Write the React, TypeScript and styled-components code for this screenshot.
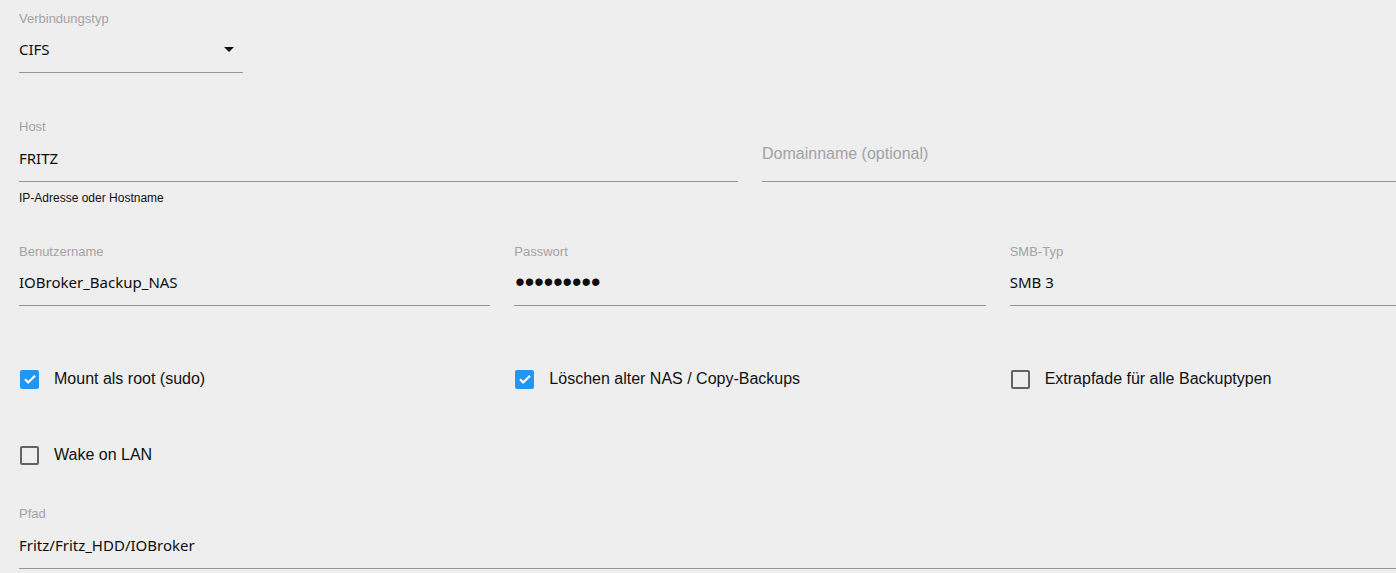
import React from "react";
import styled, { createGlobalStyle } from "styled-components";

const Global = createGlobalStyle`
  html, body { margin: 0; padding: 0; background: #eeeeee; overflow: hidden; }
  body { font-family: "Liberation Sans", Arial, sans-serif; }
`;

const Page = styled.div`
  width: 1462px;
  padding: 12px 0 0 19px;
  display: flex;
  flex-direction: column;
`;

const Section = styled.div<{ $mt?: number }>`
  margin-top: ${(p) => p.$mt ?? 0}px;
`;

const Row = styled.div<{ $cols: number }>`
  display: grid;
  grid-template-columns: repeat(${(p) => p.$cols}, 1fr);
  column-gap: 24px;
  align-items: start;
`;

const Field = styled.div<{ $width?: number }>`
  display: flex;
  flex-direction: column;
  width: ${(p) => (p.$width ? `${p.$width}px` : "auto")};
`;

const Label = styled.div`
  height: 14px;
  line-height: 14px;
  font-size: 13px;
  color: #a3a3a3;
  font-family: "Liberation Sans", Arial, sans-serif;
`;

const InputBox = styled.div<{ $h?: number }>`
  position: relative;
  height: ${(p) => p.$h ?? 47}px;
  box-sizing: border-box;
  padding-top: 0;
  display: flex;
  align-items: center;
  border-bottom: 1px solid #959595;
`;

const Value = styled.span`
  font-family: "Noto Sans", "Open Sans", sans-serif;
  font-size: 15px;
  color: #0d0d0d;
  white-space: nowrap;
`;

const Placeholder = styled.span`
  font-family: "Liberation Sans", Arial, sans-serif;
  font-size: 16px;
  color: #a3a3a3;
  margin-bottom: 8px;
`;

const Dots = styled.span`
  font-family: "Liberation Sans", Arial, sans-serif;
  font-size: 27px;
  line-height: 1;
  color: #0d0d0d;
  margin-left: 1px;
`;

const Arrow = styled.svg`
  position: absolute;
  right: 2px;
  top: 50%;
  margin-top: -12px;
  width: 24px;
  height: 24px;
`;

const Helper = styled.div`
  margin-top: 9px;
  height: 14px;
  line-height: 14px;
  font-size: 12px;
  color: #111111;
`;

const CheckRow = styled.label`
  display: flex;
  align-items: center;
  height: 42px;
  cursor: pointer;
`;

const Box = styled.span<{ $checked: boolean }>`
  width: 19px;
  height: 19px;
  box-sizing: border-box;
  margin-left: 1px;
  border-radius: 2px;
  display: flex;
  align-items: center;
  justify-content: center;
  background: ${(p) => (p.$checked ? "#2196f3" : "transparent")};
  border: ${(p) => (p.$checked ? "none" : "2px solid #636363")};
`;

const CheckText = styled.span`
  margin-left: 15px;
  font-size: 16px;
  color: #111111;
`;

function Checkbox({ checked, label }: { checked: boolean; label: string }) {
  return (
    <CheckRow>
      <Box $checked={checked}>
        {checked && (
          <svg width="16" height="16" viewBox="0 0 24 24">
            <path d="M4.5 12.5l4.8 4.8L19.5 7" fill="none" stroke="#fff" strokeWidth="3.2" />
          </svg>
        )}
      </Box>
      <CheckText>{label}</CheckText>
    </CheckRow>
  );
}

export default function App() {
  return (
    <>
      <Global />
      <Page>
        <Section>
          <Field $width={224}>
            <Label>Verbindungstyp</Label>
            <InputBox>
              <Value>CIFS</Value>
              <Arrow viewBox="0 0 24 24">
                <path d="M7 10l5 5 5-5z" fill="#111" />
              </Arrow>
            </InputBox>
          </Field>
        </Section>

        <Section $mt={47}>
          <Row $cols={2}>
            <Field>
              <Label>Host</Label>
              <InputBox $h={48}>
                <Value>FRITZ</Value>
              </InputBox>
              <Helper>IP-Adresse oder Hostname</Helper>
            </Field>
            <Field>
              <Label />
              <InputBox $h={48}>
                <Placeholder>Domainname (optional)</Placeholder>
              </InputBox>
            </Field>
          </Row>
        </Section>

        <Section $mt={40}>
          <Row $cols={3}>
            <Field>
              <Label>Benutzername</Label>
              <InputBox>
                <Value>IOBroker_Backup_NAS</Value>
              </InputBox>
            </Field>
            <Field>
              <Label>Passwort</Label>
              <InputBox>
                <Dots>•••••••••</Dots>
              </InputBox>
            </Field>
            <Field>
              <Label>SMB-Typ</Label>
              <InputBox>
                <Value>SMB 3</Value>
              </InputBox>
            </Field>
          </Row>
        </Section>

        <Section $mt={52}>
          <Row $cols={3}>
            <Checkbox checked label="Mount als root (sudo)" />
            <Checkbox checked label="Löschen alter NAS / Copy-Backups" />
            <Checkbox checked={false} label="Extrapfade für alle Backuptypen" />
          </Row>
        </Section>

        <Section $mt={34}>
          <Row $cols={3}>
            <Checkbox checked={false} label="Wake on LAN" />
          </Row>
        </Section>

        <Section $mt={31}>
          <Field>
            <Label>Pfad</Label>
            <InputBox $h={48}>
              <Value>Fritz/Fritz_HDD/IOBroker</Value>
            </InputBox>
          </Field>
        </Section>
      </Page>
    </>
  );
}
